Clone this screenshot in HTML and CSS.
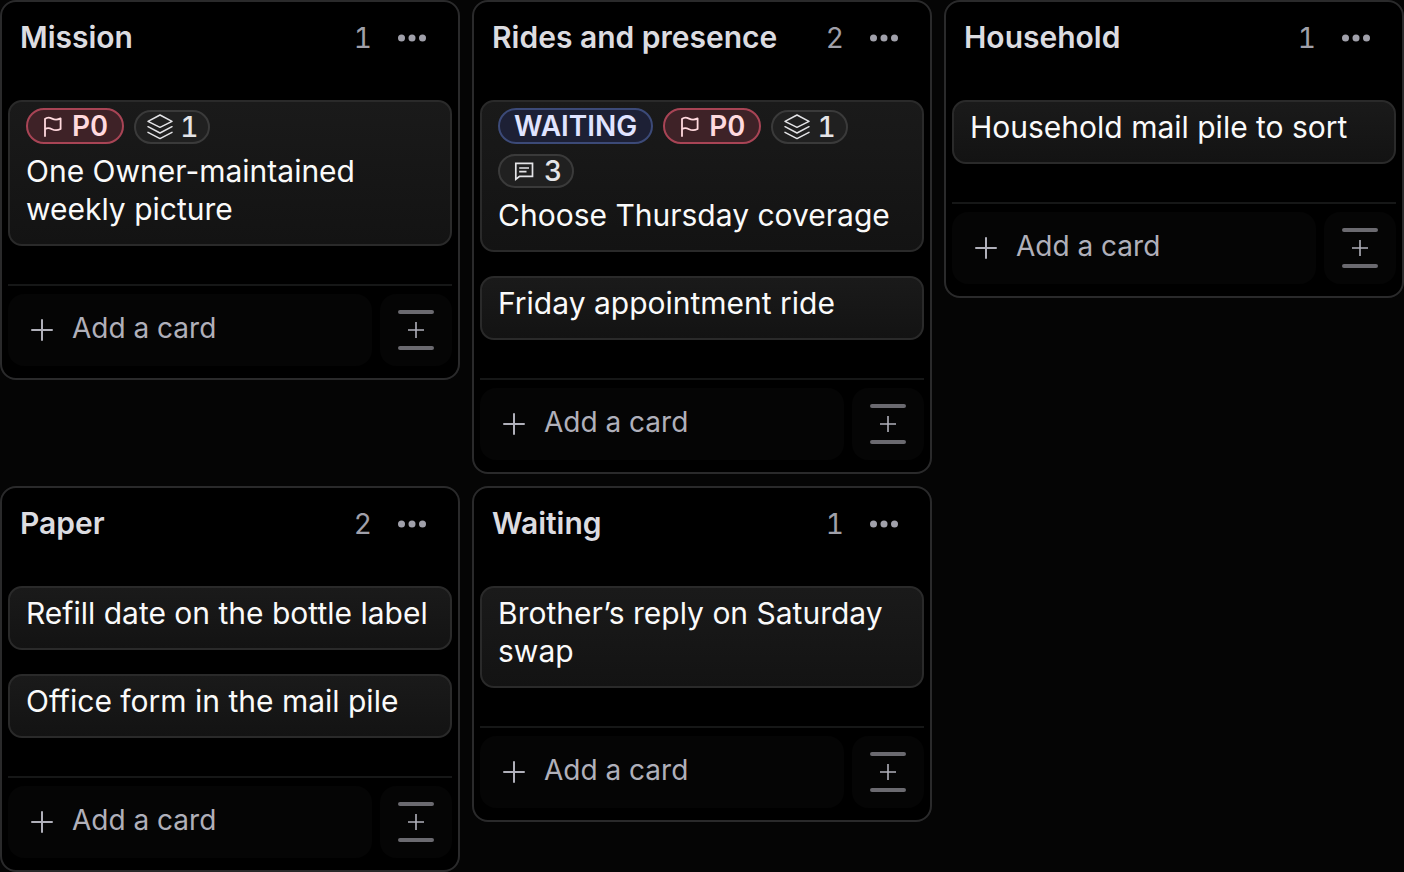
FILE: index.html
```html
<!DOCTYPE html>
<html lang="en">

<head>
    <meta charset="UTF-8">
    <meta name="viewport" content="width=device-width, initial-scale=1.0">
    <title>Board</title>
    <link rel="stylesheet" href="styles.css">
</head>

<body>

    <!-- shared icons -->
    <svg class="sprite" aria-hidden="true">
        <symbol id="icon-dots" viewBox="0 0 28 8">
            <g fill="currentColor">
                <circle cx="3.5" cy="4" r="3.5" />
                <circle cx="14" cy="4" r="3.5" />
                <circle cx="24.5" cy="4" r="3.5" />
            </g>
        </symbol>
        <symbol id="icon-flag" viewBox="0 0 20 22">
            <path d="M3 21V4C5 2.200 7.200 2.200 10 3.600C12.800 5 15.500 5 18.600 3.400V14C15.500 15.600 12.800 15.600 10 14.200C7.200 12.800 5 12.800 3 14.200" fill="none" stroke="currentColor" stroke-width="1.800" stroke-linecap="round" stroke-linejoin="round" />
        </symbol>
        <symbol id="icon-layers" viewBox="0 0 28 26">
            <g fill="none" stroke="currentColor" stroke-width="1.500" stroke-linecap="round" stroke-linejoin="round">
                <path d="M14 1L26 7.300L14 13.300L2 7.300Z" />
                <path d="M2 12.700L14 19L26 12.700" />
                <path d="M2 18.300L14 24.600L26 18.300" />
            </g>
        </symbol>
        <symbol id="icon-comment" viewBox="0 0 20 20">
            <g fill="none" stroke="currentColor" stroke-width="1.700">
                <path d="M1.800 18.200V2.400H18.500V15.400H5.600Z" stroke-linejoin="miter" />
                <path d="M5.200 7H15M5.200 10.600H12.500" />
            </g>
        </symbol>
        <symbol id="icon-plus" viewBox="0 0 24 24">
            <path d="M12 2V22M2 12H22" fill="none" stroke="currentColor" stroke-width="2" stroke-linecap="round" />
        </symbol>
        <symbol id="icon-insert" viewBox="0 0 36 40">
            <path d="M2 2H34M2 38H34" fill="none" stroke="#6b6a70" stroke-width="4" stroke-linecap="round" />
            <path d="M18 12V28M10 20H26" fill="none" stroke="currentColor" stroke-width="1.600" />
        </symbol>
    </svg>

    <main class="board">

        <section class="column">
            <header class="column-header">
                <h2>Mission</h2>
                <span class="count">1</span>
                <button type="button" class="menu" aria-label="Mission menu"><svg><use href="#icon-dots" /></svg></button>
            </header>
            <div class="cards">
                <article class="card">
                    <div class="badges">
                        <span class="badge priority"><svg class="flag"><use href="#icon-flag" /></svg>P0</span>
                        <span class="badge meta"><svg class="layers"><use href="#icon-layers" /></svg>1</span>
                    </div>
                    <h3>One Owner-maintained weekly picture</h3>
                </article>
            </div>
            <footer class="column-footer">
                <button type="button" class="add"><svg><use href="#icon-plus" /></svg><span>Add a card</span></button>
                <button type="button" class="insert" aria-label="Add divider"><svg><use href="#icon-insert" /></svg></button>
            </footer>
        </section>

        <section class="column">
            <header class="column-header">
                <h2>Rides and presence</h2>
                <span class="count">2</span>
                <button type="button" class="menu" aria-label="Rides and presence menu"><svg><use href="#icon-dots" /></svg></button>
            </header>
            <div class="cards">
                <article class="card">
                    <div class="badges">
                        <span class="badge waiting">WAITING</span>
                        <span class="badge priority"><svg class="flag"><use href="#icon-flag" /></svg>P0</span>
                        <span class="badge meta"><svg class="layers"><use href="#icon-layers" /></svg>1</span>
                        <span class="badge meta"><svg class="comment"><use href="#icon-comment" /></svg>3</span>
                    </div>
                    <h3>Choose Thursday coverage</h3>
                </article>
                <article class="card">
                    <h3>Friday appointment ride</h3>
                </article>
            </div>
            <footer class="column-footer">
                <button type="button" class="add"><svg><use href="#icon-plus" /></svg><span>Add a card</span></button>
                <button type="button" class="insert" aria-label="Add divider"><svg><use href="#icon-insert" /></svg></button>
            </footer>
        </section>

        <section class="column">
            <header class="column-header">
                <h2>Household</h2>
                <span class="count">1</span>
                <button type="button" class="menu" aria-label="Household menu"><svg><use href="#icon-dots" /></svg></button>
            </header>
            <div class="cards">
                <article class="card">
                    <h3>Household mail pile to sort</h3>
                </article>
            </div>
            <footer class="column-footer">
                <button type="button" class="add"><svg><use href="#icon-plus" /></svg><span>Add a card</span></button>
                <button type="button" class="insert" aria-label="Add divider"><svg><use href="#icon-insert" /></svg></button>
            </footer>
        </section>

        <section class="column">
            <header class="column-header">
                <h2>Paper</h2>
                <span class="count">2</span>
                <button type="button" class="menu" aria-label="Paper menu"><svg><use href="#icon-dots" /></svg></button>
            </header>
            <div class="cards">
                <article class="card">
                    <h3>Refill date on the bottle label</h3>
                </article>
                <article class="card">
                    <h3>Office form in the mail pile</h3>
                </article>
            </div>
            <footer class="column-footer">
                <button type="button" class="add"><svg><use href="#icon-plus" /></svg><span>Add a card</span></button>
                <button type="button" class="insert" aria-label="Add divider"><svg><use href="#icon-insert" /></svg></button>
            </footer>
        </section>

        <section class="column">
            <header class="column-header">
                <h2>Waiting</h2>
                <span class="count">1</span>
                <button type="button" class="menu" aria-label="Waiting menu"><svg><use href="#icon-dots" /></svg></button>
            </header>
            <div class="cards">
                <article class="card">
                    <h3>Brother’s reply on Saturday swap</h3>
                </article>
            </div>
            <footer class="column-footer">
                <button type="button" class="add"><svg><use href="#icon-plus" /></svg><span>Add a card</span></button>
                <button type="button" class="insert" aria-label="Add divider"><svg><use href="#icon-insert" /></svg></button>
            </footer>
        </section>

    </main>
</body>

</html>
```
FILE: styles.css
```css
* {
    box-sizing: border-box;
}

body {
    margin: 0;
    background-color: #050505;
    color: #fafafa;
    font-family: Inter, "Liberation Sans", sans-serif;
    font-size: 28px;
}

h2,
h3 {
    margin: 0;
}

button {
    padding: 0;
    border: none;
    background: none;
    font: inherit;
    cursor: pointer;
}

svg {
    display: block;
    flex: none;
}

.sprite {
    display: none;
}

.board {
    display: grid;
    grid-template-columns: repeat(3, 1fr);
    gap: 12px;
    align-items: start;
}

.column {
    padding: 0 6px 12px;
    border: 2px solid #2a2a2b;
    border-radius: 16px;
    background-color: #000;
}

.column-header {
    display: flex;
    align-items: center;
    height: 72px;
    margin-bottom: 26px;
    padding: 0 26px 0 12px;
}

.column-header h2 {
    flex: 1;
    padding-bottom: 2px;
    font-size: 30px;
    font-weight: 600;
    line-height: 36px;
    color: #dcdce0;
}

.count {
    margin-right: 26px;
    font-variant-numeric: tabular-nums;
    color: #a0a0aa;
}

.menu {
    color: #a0a0aa;
}

.menu svg {
    width: 28px;
    height: 8px;
}

.cards {
    display: flex;
    flex-direction: column;
    gap: 24px;
    margin-bottom: 38px;
}

.card {
    padding: 6px 16px 16px;
    border: 2px solid #2a2a2a;
    border-radius: 14px;
    background: linear-gradient(#1a1a1a, #131313);
}

.card h3 {
    font-size: 30px;
    font-weight: 400;
    line-height: 38px;
}

.badges {
    display: flex;
    flex-wrap: wrap;
    align-items: flex-end;
    gap: 10px;
    margin-bottom: 8px;
}

.badge {
    display: flex;
    align-items: center;
    height: 36px;
    padding: 0 14px;
    border: 2px solid;
    border-radius: 18px;
    font-weight: 600;
    font-variant-numeric: tabular-nums;
}

.waiting {
    border-color: #3c4a78;
    background-color: #1d2035;
    color: #e0e4ff;
}

.priority {
    gap: 10px;
    border-color: #a84455;
    background-color: #3e2227;
    color: #ffd9de;
}

.meta {
    gap: 6px;
    height: 34px;
    padding: 0 10px;
    border-color: #3a3a3a;
    background-color: #202020;
    color: #e4e4e7;
    font-weight: 500;
}

.flag {
    width: 20px;
    height: 22px;
}

.layers {
    width: 28px;
    height: 26px;
}

.comment {
    width: 20px;
    height: 20px;
    margin: 0 4px;
}

.column-footer {
    display: flex;
    gap: 8px;
    padding-top: 8px;
    border-top: 2px solid #161717;
}

.add,
.insert {
    display: flex;
    align-items: center;
    height: 72px;
    border-radius: 16px;
    background-color: #050505;
}

.add {
    flex: 1;
    gap: 18px;
    padding: 0 22px;
    color: #b0b0ba;
}

.add span {
    padding-bottom: 4px;
}

.add svg {
    width: 24px;
    height: 24px;
}

.insert {
    justify-content: center;
    width: 72px;
    color: #b0b0ba;
}

.insert svg {
    width: 36px;
    height: 40px;
}
```
